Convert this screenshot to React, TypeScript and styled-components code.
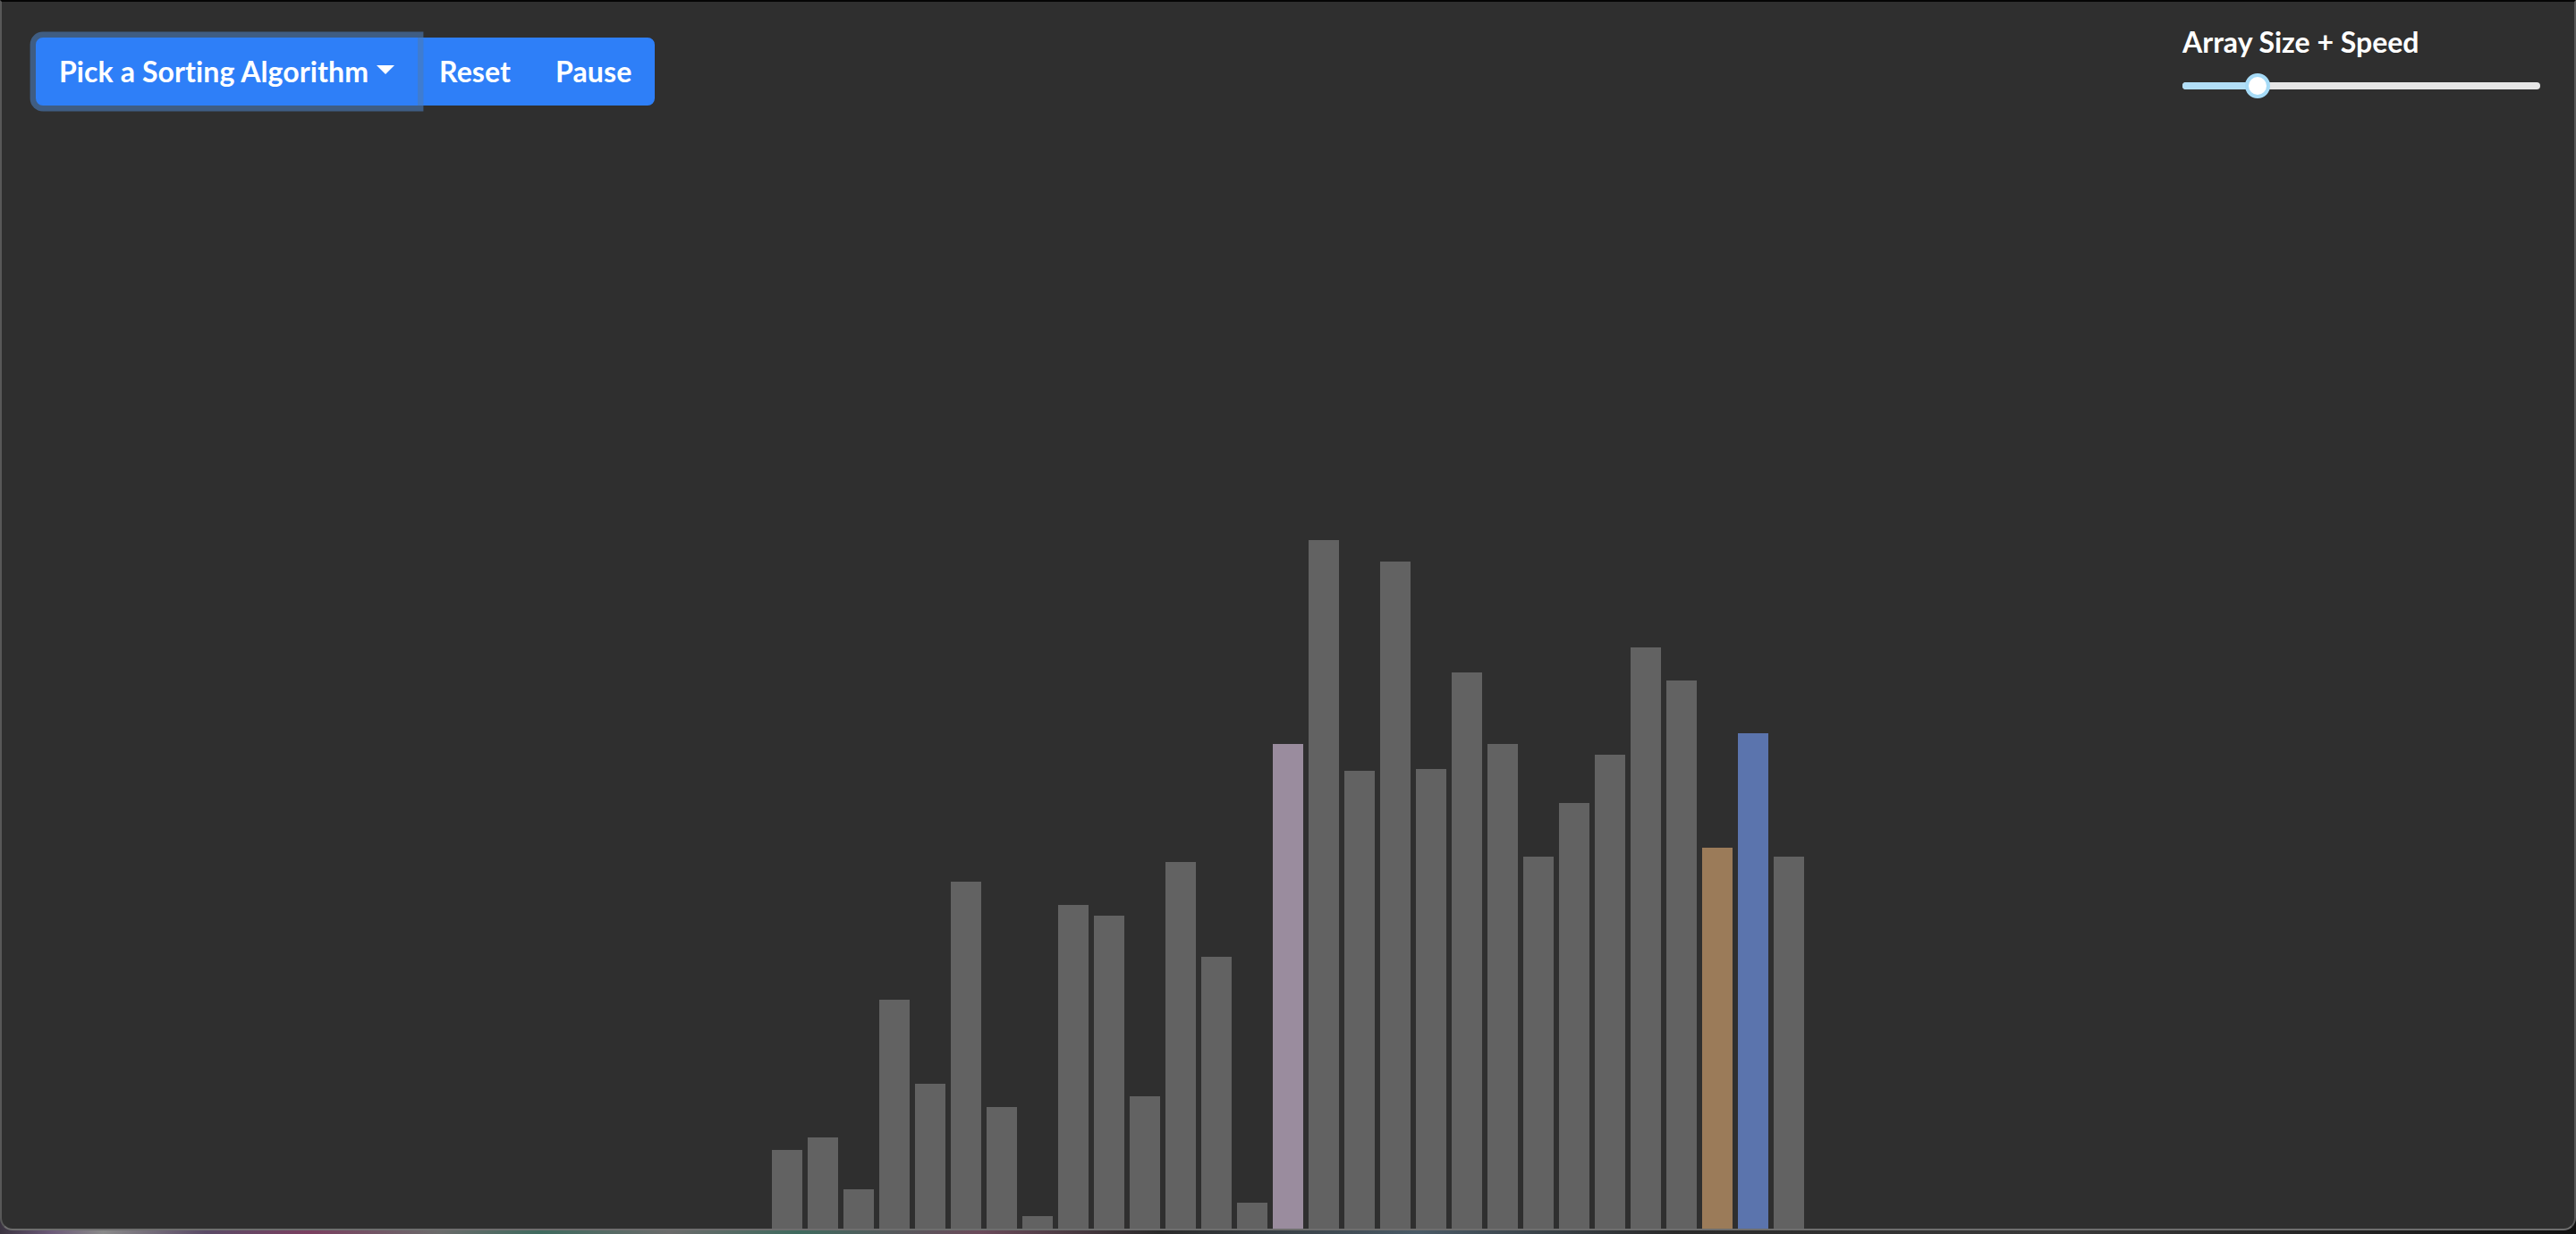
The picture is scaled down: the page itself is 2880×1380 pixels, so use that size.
import React from "react";
import styled, { createGlobalStyle } from "styled-components";

const GlobalStyle = createGlobalStyle`
  html, body {
    margin: 0;
    padding: 0;
    height: 100%;
    overflow: hidden;
  }
  body {
    font-family: Lato, "Open Sans", "Liberation Sans", sans-serif;
    font-variant-ligatures: none;
    background: linear-gradient(
      90deg,
      #3a3340 0%, #6c5a78 2%, #8a8a8a 4%, #5a4a66 8%, #7a3f60 12%, #6a6a6a 17%,
      #3f6a5e 21%, #6a6a6a 26%, #3f6a5e 31%, #6a4a5a 38%, #2a2a2a 45%, #4a5a66 55%,
      #2a2a2a 65%, #3a3a3a 80%, #111 100%
    );
  }
  #root {
    height: 100%;
  }
`;

const Window = styled.div`
  box-sizing: border-box;
  height: calc(100vh - 4px);
  display: flex;
  flex-direction: column;
  background: #2f2f2f;
  border-top: 2px solid #050505;
  border-left: 2px solid #585858;
  border-right: 2px solid #585858;
  border-bottom: 2px solid #6e6e6e;
  border-radius: 0 0 14px 14px;
  overflow: hidden;
`;

const Header = styled.header`
  display: flex;
  justify-content: space-between;
  align-items: flex-start;
  padding: 0 38px;
`;

const ButtonGroup = styled.div`
  display: inline-flex;
  margin-top: 40px;
`;

const Button = styled.button<{ $focused?: boolean; $first?: boolean; $last?: boolean }>`
  position: relative;
  z-index: ${(p) => (p.$focused ? 1 : 0)};
  height: 76px;
  box-sizing: border-box;
  padding: 12px 24px;
  margin-left: ${(p) => (p.$first ? "0" : "-2px")};
  border: 2px solid #2e7ff8;
  background: #2e7ff8;
  color: #ffffff;
  font-family: Lato, "Open Sans", "Liberation Sans", sans-serif;
  font-weight: 700;
  font-size: 32px;
  line-height: 48px;
  letter-spacing: 0.1px;
  font-variant-ligatures: none;
  white-space: nowrap;
  cursor: pointer;
  display: inline-flex;
  align-items: center;
  border-radius: ${(p) =>
    p.$first ? "8px 0 0 8px" : p.$last ? "0 8px 8px 0" : "0"};
  box-shadow: ${(p) =>
    p.$focused ? "0 0 0 6.4px rgba(74, 122, 184, 0.62)" : "none"};
  outline: none;
`;

const Caret = styled.span`
  display: inline-block;
  width: 0;
  height: 0;
  margin-left: 9px;
  margin-top: -4px;
  border-top: 10px solid #ffffff;
  border-left: 10px solid transparent;
  border-right: 10px solid transparent;
`;

const SliderPanel = styled.div`
  width: 400px;
  margin-top: 26px;
  display: flex;
  flex-direction: column;
`;

const SliderLabel = styled.div`
  color: #ffffff;
  font-family: Lato, "Open Sans", "Liberation Sans", sans-serif;
  font-weight: 700;
  font-size: 32px;
  line-height: 38px;
  height: 38px;
`;

const SliderBox = styled.div`
  position: relative;
  height: 28px;
  margin-top: 16px;
  display: flex;
  align-items: center;
`;

const Rail = styled.div`
  position: relative;
  width: 100%;
  height: 8px;
  border-radius: 4px;
  background: #e6e6e6;
`;

const Track = styled.div`
  position: absolute;
  left: 0;
  top: 0;
  height: 8px;
  border-radius: 4px;
  background: #b2dff7;
`;

const Handle = styled.div`
  position: absolute;
  top: 50%;
  width: 28px;
  height: 28px;
  box-sizing: border-box;
  margin-left: -14px;
  margin-top: -14px;
  border-radius: 50%;
  border: 4px solid #a6dbf7;
  background: #ffffff;
`;

const BarArea = styled.main`
  flex: 1;
  display: flex;
  justify-content: center;
  align-items: flex-end;
  gap: 6px;
`;

const barColors = {
  idle: "#626262",
  pivot: "#9a8c9e",
  compare: "#9b7b59",
  swap: "#5b74ad",
} as const;

type BarState = keyof typeof barColors;

const Bar = styled.div<{ $state: BarState }>`
  width: 34px;
  flex: 0 0 34px;
  background: ${(p) => barColors[p.$state]};
`;

const heights = [
  88, 102, 44, 256, 162, 388, 136, 14, 362, 350, 148, 410, 304, 29, 542, 770,
  512, 746, 514, 622, 542, 416, 476, 530, 650, 613, 426, 554, 416,
];

const stateFor = (i: number): BarState =>
  i === 14 ? "pivot" : i === 26 ? "compare" : i === 27 ? "swap" : "idle";

export default function App() {
  const value = 21;
  return (
    <>
      <GlobalStyle />
      <Window>
        <Header>
          <ButtonGroup>
            <Button $first $focused>
              Pick a Sorting Algorithm
              <Caret />
            </Button>
            <Button>Reset</Button>
            <Button $last>Pause</Button>
          </ButtonGroup>
          <SliderPanel>
            <SliderLabel>Array Size + Speed</SliderLabel>
            <SliderBox>
              <Rail>
                <Track style={{ width: `${value}%` }} />
                <Handle style={{ left: `${value}%` }} />
              </Rail>
            </SliderBox>
          </SliderPanel>
        </Header>
        <BarArea>
          {heights.map((h, i) => (
            <Bar key={i} $state={stateFor(i)} style={{ height: `${h}px` }} />
          ))}
        </BarArea>
      </Window>
    </>
  );
}
